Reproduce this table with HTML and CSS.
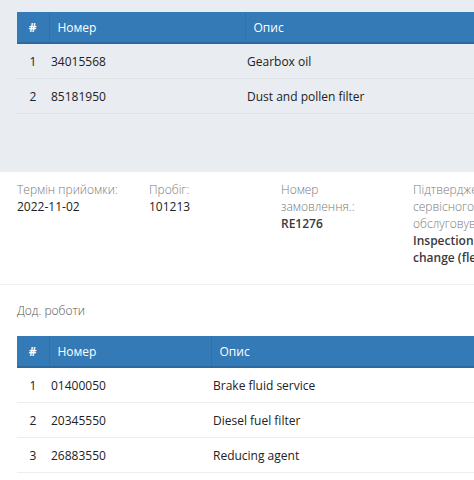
FILE: index.html
```html
<!DOCTYPE html>
<html lang="uk">
<head>
<meta charset="utf-8">
<link rel="stylesheet" href="styles.css">
</head>
<body>
<section class="top">
  <table class="grid grid-a">
    <thead>
      <tr><th class="c-n">#</th><th class="c-num">Номер</th><th class="c-desc">Опис</th></tr>
    </thead>
    <tbody>
      <tr><td class="c-n">1</td><td>34015568</td><td>Gearbox oil</td></tr>
      <tr><td class="c-n">2</td><td>85181950</td><td>Dust and pollen filter</td></tr>
    </tbody>
  </table>
</section>
<section class="info">
  <div class="info-item">
    <div class="label">Термін прийомки:</div>
    <div class="value">2022-11-02</div>
  </div>
  <div class="info-item">
    <div class="label">Пробіг:</div>
    <div class="value">101213</div>
  </div>
  <div class="info-item">
    <div class="label">Номер<br>замовлення.:</div>
    <div class="value strong">RE1276</div>
  </div>
  <div class="info-item">
    <div class="label">Підтвердження<br>сервісного<br>обслуговування:</div>
    <div class="value strong">Inspection with oil<br>change (flexible)</div>
  </div>
</section>
<section class="extra">
  <div class="extra-title">Дод. роботи</div>
  <table class="grid grid-b">
    <thead>
      <tr><th class="c-n">#</th><th class="c-num">Номер</th><th class="c-desc">Опис</th></tr>
    </thead>
    <tbody>
      <tr><td class="c-n">1</td><td>01400050</td><td>Brake fluid service</td></tr>
      <tr><td class="c-n">2</td><td>20345550</td><td>Diesel fuel filter</td></tr>
      <tr><td class="c-n">3</td><td>26883550</td><td>Reducing agent</td></tr>
    </tbody>
  </table>
</section>
</body>
</html>
```
FILE: styles.css
```css
html, body {
  margin: 0;
  padding: 0;
}
body {
  width: 474px;
  overflow: hidden;
  background: #fff;
  font-family: "Open Sans", "Noto Sans", sans-serif;
  font-size: 12px;
  color: #333;
}
.top {
  background: #e9ecf0;
  padding: 12px 0 0 17px;
  height: 160px;
}
.grid {
  border-collapse: collapse;
  width: 720px;
  table-layout: fixed;
}
.grid th {
  background: #337ab7;
  color: #fff;
  font-weight: 400;
  text-align: left;
  height: 30px;
  padding: 0 8px;
  border-left: 1px solid #2e71ab;
  border-bottom: 2px solid #2b6aa1;
}
.grid th:first-child {
  border-left: none;
}
.grid th.c-n {
  font-weight: 700;
}
.grid td {
  height: 34px;
  padding: 0 2px;
  border-bottom: 1px solid #dde1e5;
  color: #222;
}
.grid .c-n {
  width: 32px;
  padding: 0;
  text-align: center;
  box-sizing: border-box;
}
.grid-a .c-num { width: 196px; box-sizing: border-box; }
.grid-b .c-num { width: 162px; box-sizing: border-box; }
.grid-b td {
  border-bottom-color: #eceef0;
}
.info {
  display: grid;
  grid-template-columns: repeat(4, 132px);
  padding: 9px 0 18px 17px;
  border-bottom: 1px solid #eff1f3;
  line-height: 17px;
}
.info-item {
  padding-right: 12px;
  white-space: nowrap;
}
.label {
  color: #7a7a7a;
  font-weight: 300;
}
.value {
  color: #222;
}
.value.strong {
  font-weight: 600;
  color: #3a3a3a;
}
.extra {
  padding: 17px 0 0 17px;
}
.extra-title {
  line-height: 17px;
  color: #555;
  font-weight: 300;
  margin-bottom: 17px;
}
```
